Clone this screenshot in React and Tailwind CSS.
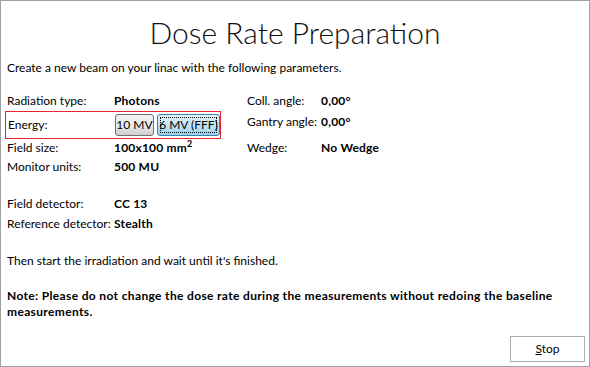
import React from "react"

const font = { fontFamily: 'Lato, "Open Sans", sans-serif' }

function Label({ children }) {
    return <span className="whitespace-nowrap">{children}</span>
}

function Value({ children }) {
    return <span className="font-bold tracking-[0.2px] whitespace-nowrap">{children}</span>
}

function EnergyButton({ children, selected }) {
    if (selected) {
        return (
            <button className="w-[63px] h-[22px] p-[2px] rounded-[3px] border border-[#3c7fb1] bg-gradient-to-b from-[#e5f4fc] via-[#c4e5f6] to-[#98d1ef] text-[12px] leading-none text-black whitespace-nowrap">
                <span className="flex items-center justify-center h-full border border-dotted border-black">{children}</span>
            </button>
        )
    }
    return (
        <button className="w-[39px] h-[22px] rounded-[3px] border border-[#707070] bg-gradient-to-b from-[#f2f2f2] via-[#ebebeb] to-[#cfcfcf] text-[12px] leading-none text-black whitespace-nowrap">
            {children}
        </button>
    )
}

export default function App() {
    return (
        <div
            className="w-[590px] h-[367px] bg-white border border-[#a0a0a0] flex flex-col text-[12px] text-black overflow-hidden"
            style={font}
        >
            <h1 className="text-center font-light text-[30px] leading-none mt-[16px] h-[32px] text-[#111] whitespace-nowrap">
                Dose Rate Preparation
            </h1>

            <p className="mt-[11px] ml-[6px] h-[16px] leading-[16px] whitespace-nowrap">
                Create a new beam on your linac with the following parameters.
            </p>

            <div className="mt-[14px] flex">
                <div className="flex flex-col w-[240px]">
                    <div className="flex items-center h-[21px] pl-[6px]">
                        <div className="w-[107px] shrink-0"><Label>Radiation type:</Label></div>
                        <Value>Photons</Value>
                    </div>
                    <div className="flex items-center h-[28px] w-[216px] ml-[4px] border border-[#e0282e] pl-[2px]">
                        <div className="w-[107px] shrink-0"><Label>Energy:</Label></div>
                        <div className="flex gap-[3px]">
                            <EnergyButton>10 MV</EnergyButton>
                            <EnergyButton selected>6 MV (FFF)</EnergyButton>
                        </div>
                    </div>
                    <div className="flex items-center h-[17px] pl-[6px]">
                        <div className="w-[107px] shrink-0"><Label>Field size:</Label></div>
                        <Value>
                            100x100 mm<sup className="text-[9px]">2</sup>
                        </Value>
                    </div>
                    <div className="flex items-center h-[22px] pl-[6px]">
                        <div className="w-[107px] shrink-0"><Label>Monitor units:</Label></div>
                        <Value>500 MU</Value>
                    </div>
                </div>

                <div className="flex flex-col ml-[6px]">
                    <div className="flex items-center h-[21px]">
                        <div className="w-[74px] shrink-0"><Label>Coll. angle:</Label></div>
                        <Value>0,00°</Value>
                    </div>
                    <div className="flex items-center h-[22px]">
                        <div className="w-[74px] shrink-0"><Label>Gantry angle:</Label></div>
                        <Value>0,00°</Value>
                    </div>
                    <div className="flex items-center h-[30px]">
                        <div className="w-[74px] shrink-0"><Label>Wedge:</Label></div>
                        <Value>No Wedge</Value>
                    </div>
                </div>
            </div>

            <div className="mt-[16px] flex flex-col pl-[6px]">
                <div className="flex items-center h-[20px]">
                    <div className="w-[107px] shrink-0"><Label>Field detector:</Label></div>
                    <Value>CC 13</Value>
                </div>
                <div className="flex items-center h-[20px]">
                    <div className="w-[107px] shrink-0"><Label>Reference detector:</Label></div>
                    <Value>Stealth</Value>
                </div>
            </div>

            <p className="mt-[19px] ml-[6px] leading-[16px] whitespace-nowrap">
                Then start the irradiation and wait until it's finished.
            </p>

            <p className="mt-[19px] ml-[6px] w-[565px] font-bold tracking-[0.35px] leading-[16px]">
                Note: Please do not change the dose rate during the measurements without redoing the baseline
                measurements.
            </p>

            <div className="mt-auto flex justify-end pr-[4px] pb-[4px]">
                <button className="w-[75px] h-[26px] border border-[#adadad] bg-white text-[12px] text-black">
                    <span className="underline">S</span>top
                </button>
            </div>
        </div>
    )
}
